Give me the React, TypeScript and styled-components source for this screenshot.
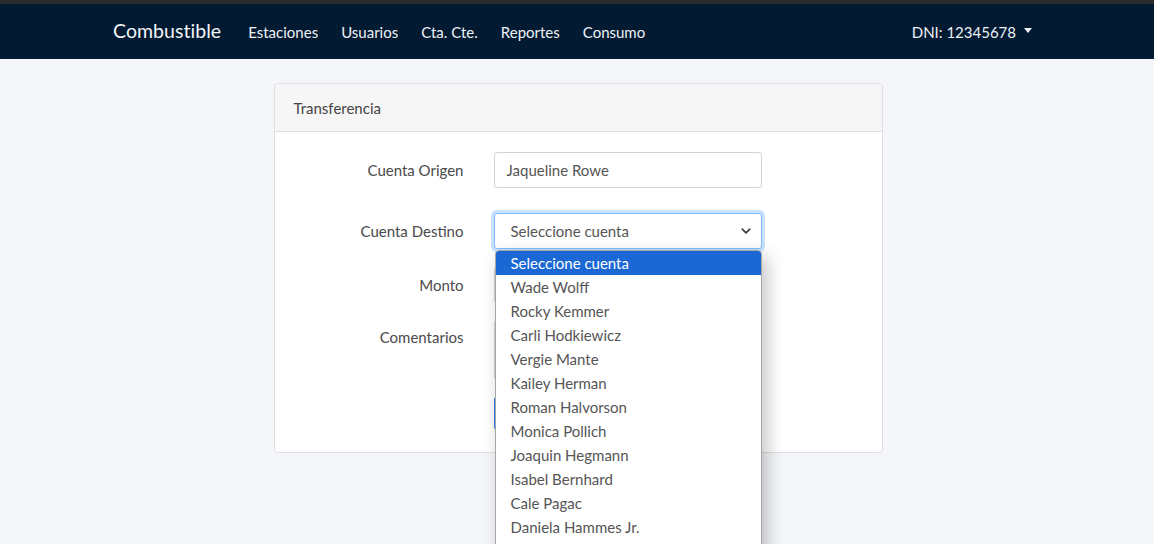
import React from "react";
import styled, { createGlobalStyle } from "styled-components";

const Global = createGlobalStyle`
  html, body { margin: 0; padding: 0; }
  body {
    background: #f4f6f9;
    font-family: Lato, "Open Sans", sans-serif;
    color: #333;
    height: 544px;
    overflow: hidden;
  }
  * { box-sizing: border-box; }
`;

const TopStrip = styled.div`
  height: 4px;
  background: #2b2c2e;
`;

const NavBar = styled.nav`
  height: 55px;
  background: #031a33;
`;

const Container = styled.div`
  width: 960px;
  margin: 0 auto;
  padding: 0 15px 0 16px;
  height: 100%;
  display: flex;
  align-items: center;
`;

const Brand = styled.a`
  color: #f2f5f8;
  font-size: 19.5px;
  margin-right: 19px;
  margin-top: -2px;
  letter-spacing: 0.05px;
`;

const NavLinks = styled.div`
  display: flex;
  flex: 1;
`;

const NavLink = styled.a`
  color: #eef2f6;
  font-size: 15px;
  padding: 0 8px;
  margin-right: 7px;
`;

const UserMenu = styled.div`
  display: flex;
  align-items: center;
  gap: 8px;
  color: #eef2f6;
  font-size: 15px;
  padding-right: 10px;
`;

const Caret = styled.span`
  width: 0;
  height: 0;
  border-left: 4.5px solid transparent;
  border-right: 4.5px solid transparent;
  border-top: 5px solid #eef2f6;
  margin-top: -2px;
`;

const Main = styled.main`
  width: 960px;
  margin: 24px auto 0;
  padding: 0 15px;
  display: flex;
  justify-content: center;
`;

const Card = styled.section`
  width: 609px;
  margin-left: 2px;
  background: #fff;
  border: 1px solid #dcdfe2;
  border-radius: 4px;
  position: relative;
`;

const CardHeader = styled.header`
  height: 48px;
  background: #f6f6f6;
  border-bottom: 1px solid #dcdfe2;
  padding: 0 19px;
  display: flex;
  align-items: center;
  font-size: 15px;
  color: #444;
  border-radius: 4px 4px 0 0;
`;

const CardBody = styled.div`
  padding: 20px 0 22px;
`;

const Row = styled.div<{ $mb: number; $top?: boolean }>`
  display: grid;
  grid-template-columns: 189px 268px;
  column-gap: 30px;
  align-items: ${(p) => (p.$top ? "start" : "center")};
  margin-bottom: ${(p) => p.$mb}px;
`;

const Label = styled.label<{ $pt?: number }>`
  text-align: right;
  font-size: 15px;
  color: #4a4a4a;
  padding-top: ${(p) => p.$pt ?? 0}px;
`;

const Input = styled.div`
  height: 36px;
  border: 1px solid #ced4da;
  border-radius: 3px;
  display: flex;
  align-items: center;
  padding: 0 12px;
  font-size: 15px;
  color: #555;
  background: #fff;
`;

const Select = styled.div`
  height: 36px;
  border: 1px solid #80bdff;
  box-shadow: 0 0 0 3px rgba(0, 123, 255, 0.22);
  border-radius: 3px;
  display: flex;
  align-items: center;
  justify-content: space-between;
  padding: 0 10px 0 16px;
  font-size: 15px;
  color: #555;
  background: #fff;
  position: relative;
`;

const TextArea = styled.div`
  height: 60px;
  border: 1px solid #ced4da;
  border-radius: 3px;
  background: #fff;
`;

const Button = styled.div`
  width: 90px;
  height: 33px;
  background: #2c7be5;
  border-radius: 3px;
`;

const Dropdown = styled.ul`
  position: absolute;
  left: 1px;
  top: 37px;
  width: 267px;
  margin: 0;
  padding: 0;
  list-style: none;
  background: #fff;
  border: 1px solid #a6a6a6;
  border-radius: 4px 4px 0 0;
  box-shadow: 5px 6px 18px rgba(0, 0, 0, 0.24);
  z-index: 10;
  height: 320px;
  overflow: hidden;
`;

const Option = styled.li<{ $active?: boolean }>`
  height: 24px;
  display: flex;
  align-items: center;
  padding-left: 15px;
  font-size: 15px;
  color: ${(p) => (p.$active ? "#fff" : "#555")};
  background: ${(p) => (p.$active ? "#1b67d3" : "transparent")};
`;

const SelectWrap = styled.div`
  position: relative;
`;

const options = [
  "Seleccione cuenta",
  "Wade Wolff",
  "Rocky Kemmer",
  "Carli Hodkiewicz",
  "Vergie Mante",
  "Kailey Herman",
  "Roman Halvorson",
  "Monica Pollich",
  "Joaquin Hegmann",
  "Isabel Bernhard",
  "Cale Pagac",
  "Daniela Hammes Jr.",
];

export default function App() {
  return (
    <>
      <Global />
      <TopStrip />
      <NavBar>
        <Container>
          <Brand>Combustible</Brand>
          <NavLinks>
            <NavLink>Estaciones</NavLink>
            <NavLink>Usuarios</NavLink>
            <NavLink>Cta. Cte.</NavLink>
            <NavLink>Reportes</NavLink>
            <NavLink>Consumo</NavLink>
          </NavLinks>
          <UserMenu>
            DNI: 12345678 <Caret />
          </UserMenu>
        </Container>
      </NavBar>
      <Main>
        <Card>
          <CardHeader>Transferencia</CardHeader>
          <CardBody>
            <Row $mb={25}>
              <Label>Cuenta Origen</Label>
              <Input>Jaqueline Rowe</Input>
            </Row>
            <Row $mb={18}>
              <Label>Cuenta Destino</Label>
              <SelectWrap>
                <Select>
                  Seleccione cuenta
                  <svg width="10" height="10" viewBox="0 0 16 16">
                    <path d="M2 5l6 6 6-6" fill="none" stroke="#343a40" strokeWidth="2.5" strokeLinecap="round" strokeLinejoin="round" />
                  </svg>
                </Select>
                <Dropdown>
                  {options.map((o, i) => (
                    <Option key={o} $active={i === 0}>{o}</Option>
                  ))}
                </Dropdown>
              </SelectWrap>
            </Row>
            <Row $mb={17}>
              <Label>Monto</Label>
              <Input />
            </Row>
            <Row $mb={17} $top>
              <Label $pt={8}>Comentarios</Label>
              <TextArea />
            </Row>
            <Row $mb={0}>
              <span />
              <Button />
            </Row>
          </CardBody>
        </Card>
      </Main>
    </>
  );
}
